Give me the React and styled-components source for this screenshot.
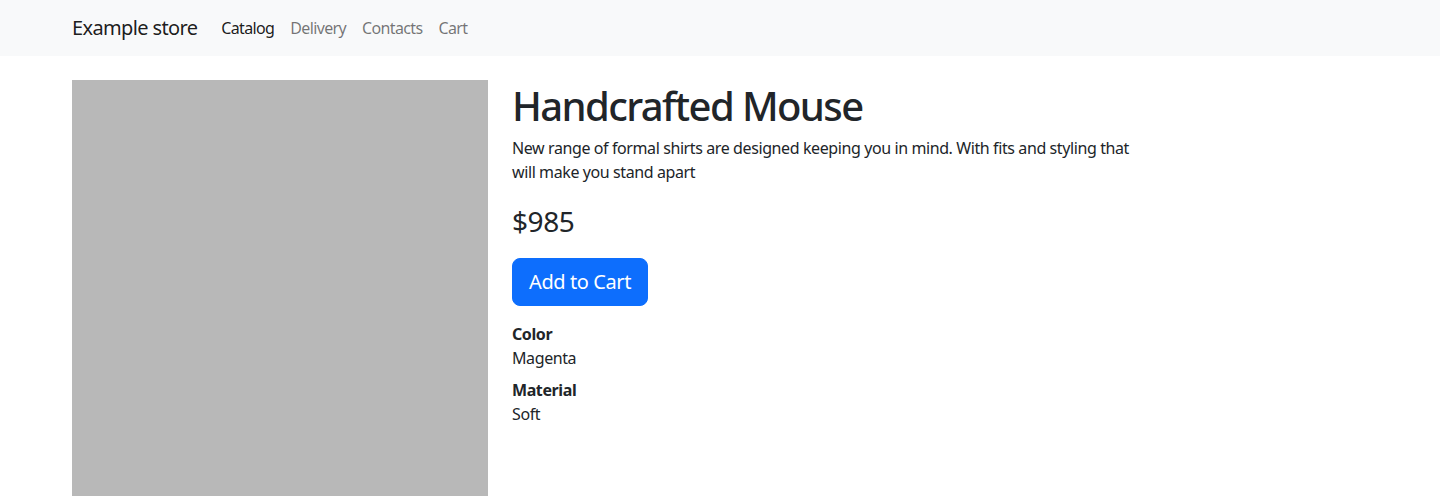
import React from "react";
import styled, { createGlobalStyle } from "styled-components";

const GlobalStyle = createGlobalStyle`
  * { box-sizing: border-box; }
  body {
    margin: 0;
    font-family: "Segoe UI", "Noto Sans", "Liberation Sans", sans-serif;
    font-size: 16px;
    line-height: 1.5;
    letter-spacing: -0.025em;
    color: #212529;
    background: #fff;
  }
`;

const Navbar = styled.nav`
  background-color: #f8f9fa;
  height: 56px;
  display: flex;
  align-items: center;
`;

const Container = styled.div`
  width: 1320px;
  margin: 0 auto;
  padding: 0 12px;
  display: flex;
  align-items: center;
  letter-spacing: -0.04em;
`;

const Brand = styled.a`
  font-size: 20px;
  line-height: 30px;
  padding: 5px 0;
  margin-right: 16px;
  color: rgba(0, 0, 0, 0.9);
  text-decoration: none;
`;

const NavMenu = styled.ul`
  display: flex;
  list-style: none;
  margin: 0;
  padding: 0;
`;

const NavLink = styled.a`
  display: block;
  padding: 8px;
  text-decoration: none;
  color: ${(p) => (p.$active ? "rgba(0, 0, 0, 0.9)" : "rgba(0, 0, 0, 0.55)")};
`;

const Main = styled.div`
  width: 1320px;
  margin: 24px auto 0;
  padding: 0 12px;
  display: flex;
  gap: 24px;
`;

const Picture = styled.div`
  width: 416px;
  height: 416px;
  flex-shrink: 0;
  background: #b8b8b8;
`;

const Details = styled.div`
  width: 636px;
`;

const Title = styled.h1`
  font-size: 40px;
  font-weight: 500;
  line-height: 1.2;
  letter-spacing: -0.04em;
  margin: 0 0 8px;
  padding-top: 2px;
  height: 48px;
`;

const Text = styled.p`
  margin: 0 0 16px;
  font-size: ${(p) => (p.$big ? "28px" : "16px")};
`;

const Button = styled.button`
  font-family: inherit;
  font-size: 20px;
  line-height: 1.5;
  letter-spacing: inherit;
  padding: 8px 16px;
  border: 1px solid #0d6efd;
  border-radius: 8px;
  background: #0d6efd;
  color: #fff;
  cursor: pointer;
`;

const Specs = styled.dl`
  margin: 16px 0 0;
`;

const Term = styled.dt`
  font-weight: 700;
`;

const Value = styled.dd`
  margin: 0 0 8px;
`;

const links = ["Catalog", "Delivery", "Contacts", "Cart"];

export default function App() {
  return (
    <>
      <GlobalStyle />
      <Navbar>
        <Container>
          <Brand href="#">Example store</Brand>
          <NavMenu>
            {links.map((l, i) => (
              <li key={l}>
                <NavLink href="#" $active={i === 0}>
                  {l}
                </NavLink>
              </li>
            ))}
          </NavMenu>
        </Container>
      </Navbar>
      <Main>
        <Picture />
        <Details>
          <Title>Handcrafted Mouse</Title>
          <Text>
            New range of formal shirts are designed keeping you in mind. With
            fits and styling that will make you stand apart
          </Text>
          <Text $big>$985</Text>
          <Button>Add to Cart</Button>
          <Specs>
            <Term>Color</Term>
            <Value>Magenta</Value>
            <Term>Material</Term>
            <Value>Soft</Value>
          </Specs>
        </Details>
      </Main>
    </>
  );
}
